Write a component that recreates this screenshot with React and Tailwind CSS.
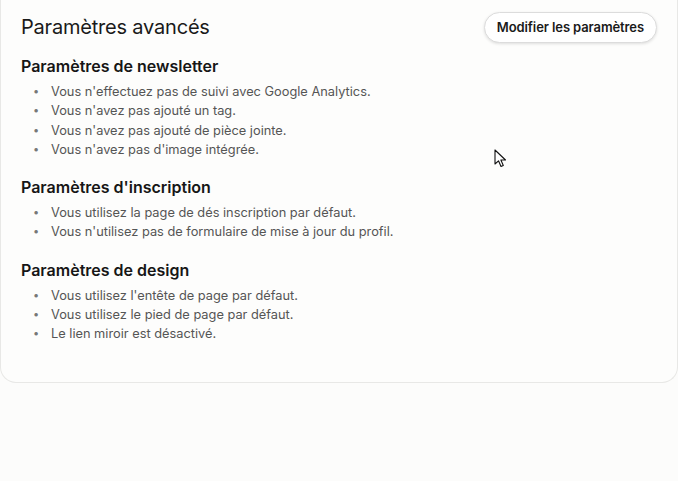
const sections = [
  {
    title: 'Paramètres de newsletter',
    items: [
      "Vous n'effectuez pas de suivi avec Google Analytics.",
      "Vous n'avez pas ajouté un tag.",
      "Vous n'avez pas ajouté de pièce jointe.",
      "Vous n'avez pas d'image intégrée.",
    ],
  },
  {
    title: "Paramètres d'inscription",
    items: [
      'Vous utilisez la page de dés inscription par défaut.',
      "Vous n'utilisez pas de formulaire de mise à jour du profil.",
    ],
  },
  {
    title: 'Paramètres de design',
    items: [
      "Vous utilisez l'entête de page par défaut.",
      'Vous utilisez le pied de page par défaut.',
      'Le lien miroir est désactivé.',
    ],
  },
]

function Cursor() {
  return (
    <svg className="absolute left-[494px] top-[149px]" width="14" height="20" viewBox="0 0 14 20">
      <path
        d="M1 1 L1 15 L4.5 11.8 L7 17.5 L9.3 16.5 L6.9 11 L11.5 11 Z"
        fill="#fff"
        stroke="#111"
        strokeWidth="1.1"
        strokeLinejoin="round"
      />
    </svg>
  )
}

export default function App() {
  return (
    <div className="relative h-[481px] w-[678px] overflow-hidden bg-[#fcfcfb] font-['Inter',sans-serif]">
      <div className="rounded-b-2xl border-x border-b border-[#e8e8e6] bg-[#fdfdfc] px-5 pb-[38px] pt-3">
        <div className="flex items-center justify-between">
          <h1 className="text-[20px] leading-[31px] tracking-[-0.2px] text-[#1a1a1a]">Paramètres avancés</h1>
          <button className="h-[31px] rounded-full border border-[#dcdcdc] bg-white px-[12px] text-[13px] font-semibold tracking-[-0.1px] text-[#1a1a1a] shadow-[0_1px_3px_rgba(0,0,0,0.12)]">
            Modifier les paramètres
          </button>
        </div>

        <div className="mt-3 flex flex-col gap-[17px]">
          {sections.map((s) => (
            <div key={s.title}>
              <h2 className="text-[16px] font-semibold leading-[22px] text-[#161616]">{s.title}</h2>
              <ul className="mt-[5px]">
                {s.items.map((item) => (
                  <li key={item} className="flex text-[12.8px] leading-[19.3px] text-[#555]">
                    <span className="w-[30px] text-center text-[11px] text-[#777]">•</span>
                    <span>{item}</span>
                  </li>
                ))}
              </ul>
            </div>
          ))}
        </div>
      </div>
      <Cursor />
    </div>
  )
}
